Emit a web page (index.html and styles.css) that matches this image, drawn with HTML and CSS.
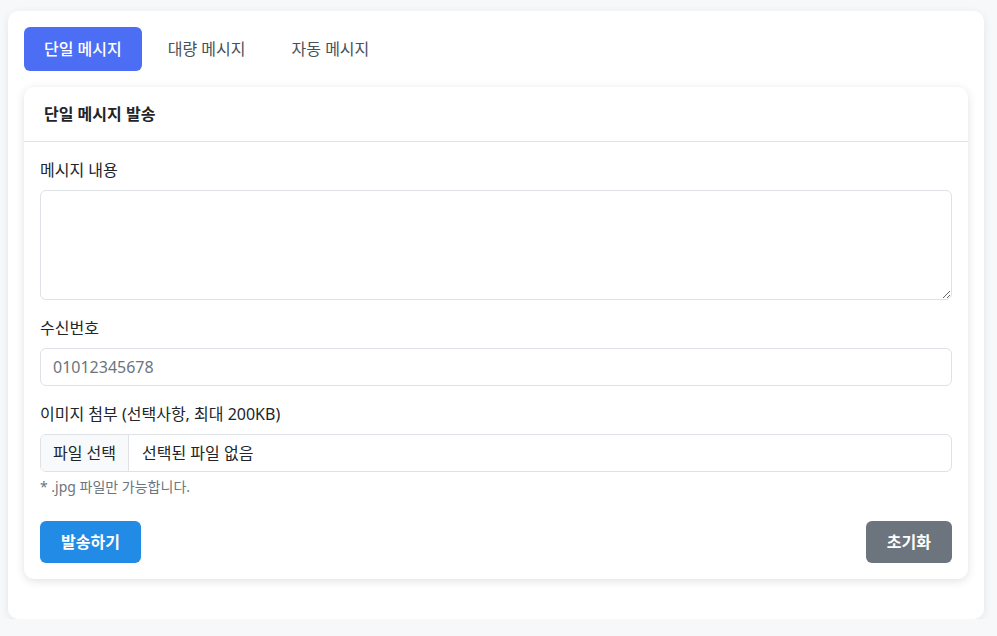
FILE: index.html
```html
<!DOCTYPE html>
<html lang="ko">
<head>
    <meta charset="UTF-8">
    <meta name="viewport" content="width=device-width, initial-scale=1.0">
    <title>메시지 발송</title>
    <link rel="stylesheet" href="styles.css">
</head>
<body>
    <div class="panel">
        <div class="tabs">
            <button class="tab active">단일 메시지</button>
            <button class="tab">대량 메시지</button>
            <button class="tab">자동 메시지</button>
        </div>

        <div class="card">
            <div class="card-header">단일 메시지 발송</div>
            <form class="card-body" id="singleForm">
                <div class="form-group">
                    <label class="form-label" for="message">메시지 내용</label>
                    <textarea id="message" class="form-control"></textarea>
                </div>

                <div class="form-group">
                    <label class="form-label" for="phone">수신번호</label>
                    <input type="text" id="phone" class="form-control" placeholder="01012345678">
                </div>

                <div class="form-group file-group">
                    <label class="form-label" for="image">이미지 첨부 (선택사항, 최대 200KB)</label>
                    <div class="file-input" onclick="document.getElementById('image').click()">
                        <span class="file-btn">파일 선택</span>
                        <span class="file-name">선택된 파일 없음</span>
                    </div>
                    <input type="file" id="image" accept=".jpg" hidden>
                    <div class="help-text">* .jpg 파일만 가능합니다.</div>
                </div>

                <div class="actions">
                    <button type="submit" class="btn btn-primary">발송하기</button>
                    <button type="reset" class="btn btn-secondary">초기화</button>
                </div>
            </form>
        </div>
    </div>
</body>
</html>
```

FILE: styles.css
```css
* {
    box-sizing: border-box;
    margin: 0;
    padding: 0;
}

body {
    font-family: "Segoe UI", "Noto Sans", "Noto Sans CJK KR", sans-serif;
    font-size: 16px;
    line-height: 1.5;
    color: #212529;
    background: #f7f8fa;
    padding: 11px 13px 0 8px;
}

.panel {
    background: #fff;
    border-radius: 10px;
    box-shadow: 0 2px 8px rgba(0, 0, 0, 0.08);
    padding: 16px 16px 40px;
}

.tabs {
    display: flex;
    gap: 6px;
    margin-bottom: 16px;
}

.tab {
    font-family: inherit;
    font-size: 16px;
    font-weight: 400;
    line-height: 24px;
    padding: 10px 20px;
    border: none;
    border-radius: 6px;
    background: transparent;
    color: #495057;
    cursor: pointer;
}

.tab.active {
    background: #4c6ef5;
    color: #fff;
    font-weight: 500;
}

.card {
    background: #fff;
    border-radius: 10px;
    box-shadow: 0 2px 10px rgba(0, 0, 0, 0.12);
}

.card-header {
    font-size: 16px;
    font-weight: 700;
    line-height: 24px;
    padding: 15px 20px;
    border-bottom: 1px solid #dee2e6;
}

.card-body {
    padding: 16px 16px;
}

.form-group {
    margin-bottom: 16px;
}

.form-label {
    display: block;
    margin-bottom: 8px;
}

.form-control {
    display: block;
    width: 100%;
    font-family: inherit;
    font-size: 16px;
    line-height: 24px;
    padding: 6px 12px;
    border: 1px solid #dee2e6;
    border-radius: 6px;
    color: #212529;
    background: #fff;
}

.form-control::placeholder {
    color: #6c757d;
}

textarea.form-control {
    height: 110px;
    resize: vertical;
}

.file-input {
    display: flex;
    line-height: 24px;
    border: 1px solid #dee2e6;
    border-radius: 6px;
    overflow: hidden;
    cursor: pointer;
}

.file-btn {
    padding: 6px 12px;
    background: #f8f9fa;
    border-right: 1px solid #dee2e6;
}

.file-name {
    padding: 6px 13px;
}

.file-group {
    margin-bottom: 24px;
}

.help-text {
    margin-top: 4px;
    font-size: 14px;
    line-height: 21px;
    color: #6c757d;
}

.actions {
    display: flex;
    justify-content: space-between;
}

.btn {
    font-family: inherit;
    font-size: 16px;
    font-weight: 700;
    line-height: 24px;
    padding: 9px 21px;
    border: none;
    border-radius: 6px;
    color: #fff;
    cursor: pointer;
}

.btn-primary {
    background: #228be6;
}

.btn-secondary {
    background: #6c757d;
}
```
